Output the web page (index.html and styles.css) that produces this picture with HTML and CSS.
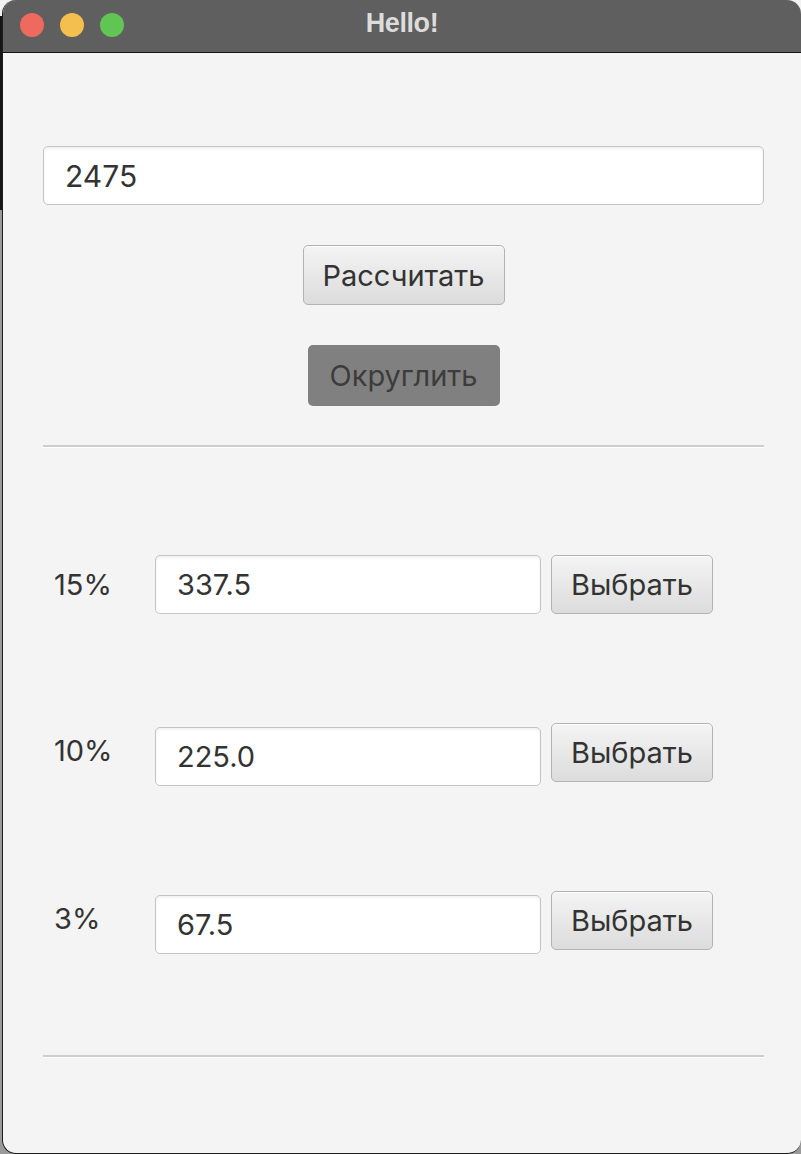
FILE: index.html
```html
<!DOCTYPE html>
<html lang="ru">
<head>
<meta charset="utf-8">
<title>Hello!</title>
<link rel="stylesheet" href="styles.css">
</head>
<body>
<div class="window">
  <div class="titlebar">
    <div class="lights">
      <span class="light red"></span>
      <span class="light yellow"></span>
      <span class="light green"></span>
    </div>
    <div class="title">Hello!</div>
  </div>
  <div class="content">
    <div class="field main-field">2475</div>
    <div class="actions">
      <button class="btn calc">Рассчитать</button>
      <button class="btn round">Округлить</button>
    </div>
    <div class="sep"></div>
    <div class="rows">
      <div class="row">
        <span class="pct">15%</span>
        <div class="field val">337.5</div>
        <button class="btn pick">Выбрать</button>
      </div>
      <div class="row shifted">
        <span class="pct">10%</span>
        <div class="field val">225.0</div>
        <button class="btn pick">Выбрать</button>
      </div>
      <div class="row shifted">
        <span class="pct">3%</span>
        <div class="field val">67.5</div>
        <button class="btn pick">Выбрать</button>
      </div>
    </div>
    <div class="sep bottom"></div>
  </div>
</div>
</body>
</html>
```

FILE: styles.css
```css
* { box-sizing: border-box; }
html, body { margin: 0; padding: 0; }
body {
  width: 801px;
  height: 1154px;
  overflow: hidden;
  background: linear-gradient(to bottom, #f2f2f2 0 16px, #151515 16px 210px, #9a9a9a 210px);
  font-family: Inter, "Noto Sans", "Liberation Sans", sans-serif;
  color: #333;
}
.window {
  margin-left: 2px;
  width: 799px;
  height: 1154px;
  border: 1px solid #1d1d1d;
  border-top: none;
  border-right: none;
  border-radius: 14px;
  background: #f4f4f4;
  overflow: hidden;
  display: flex;
  flex-direction: column;
}
.titlebar {
  height: 53px;
  flex: none;
  background: #5f5f5f;
  border-bottom: 1px solid #111;
  display: flex;
  align-items: center;
  position: relative;
}
.lights {
  display: flex;
  gap: 16px;
  padding-left: 17px;
  margin-top: -3px;
}
.light {
  width: 24px;
  height: 24px;
  border-radius: 50%;
  display: block;
}
.red { background: #ee6a5f; }
.yellow { background: #f5bf4f; }
.green { background: #61c554; }
.title {
  position: absolute;
  left: 0;
  right: 0;
  top: 8px;
  text-align: center;
  font-family: "Liberation Sans", Arial, sans-serif;
  font-weight: bold;
  font-size: 27px;
  color: #dcdcdc;
  letter-spacing: -0.4px;
}
.content {
  flex: 1;
  padding: 93px 37px 0 40px;
  display: flex;
  flex-direction: column;
}
.field {
  background: #fff;
  border: 1px solid #c4c4c4;
  border-radius: 5px;
  box-shadow: inset 0 2px 3px rgba(0,0,0,0.06);
  font-size: 29px;
  color: #333;
  display: flex;
  align-items: center;
  padding-left: 21px;
}
.main-field {
  height: 59px;
  font-size: 30px;
}
.actions {
  display: flex;
  flex-direction: column;
  align-items: center;
  gap: 40px;
  margin-top: 40px;
}
.btn {
  font-family: Inter, "Noto Sans", "Liberation Sans", sans-serif;
  font-size: 29px;
  color: #333;
  border-radius: 5px;
  padding: 0;
  margin: 0;
  cursor: default;
}
.calc, .pick {
  background: linear-gradient(to bottom, #f4f4f4, #dcdcdc);
  border: 1px solid #b3b3b3;
  box-shadow: inset 0 1px 0 #fff;
}
.calc {
  width: 202px;
  height: 60px;
}
.round {
  width: 192px;
  height: 61px;
  background: #808080;
  border: none;
  color: #3c3c3c;
}
.sep {
  margin-top: 39px;
  height: 3px;
  border-top: 2px solid #cdcdcd;
  border-bottom: 1px solid #fff;
}
.rows {
  display: flex;
  flex-direction: column;
  gap: 108px;
  margin-top: 107px;
}
.row {
  display: flex;
  align-items: flex-start;
  height: 60px;
}
.pct {
  width: 112px;
  padding-left: 11px;
  font-size: 29px;
  color: #333;
  line-height: 60px;
  flex: none;
}
.val {
  width: 386px;
  height: 59px;
}
.pick {
  width: 162px;
  height: 59px;
  margin-left: 10px;
}
.row.shifted .val {
  margin-top: 4px;
}
.row.shifted .pct {
  line-height: 56px;
}
.sep.bottom {
  margin-top: 104px;
}
```
